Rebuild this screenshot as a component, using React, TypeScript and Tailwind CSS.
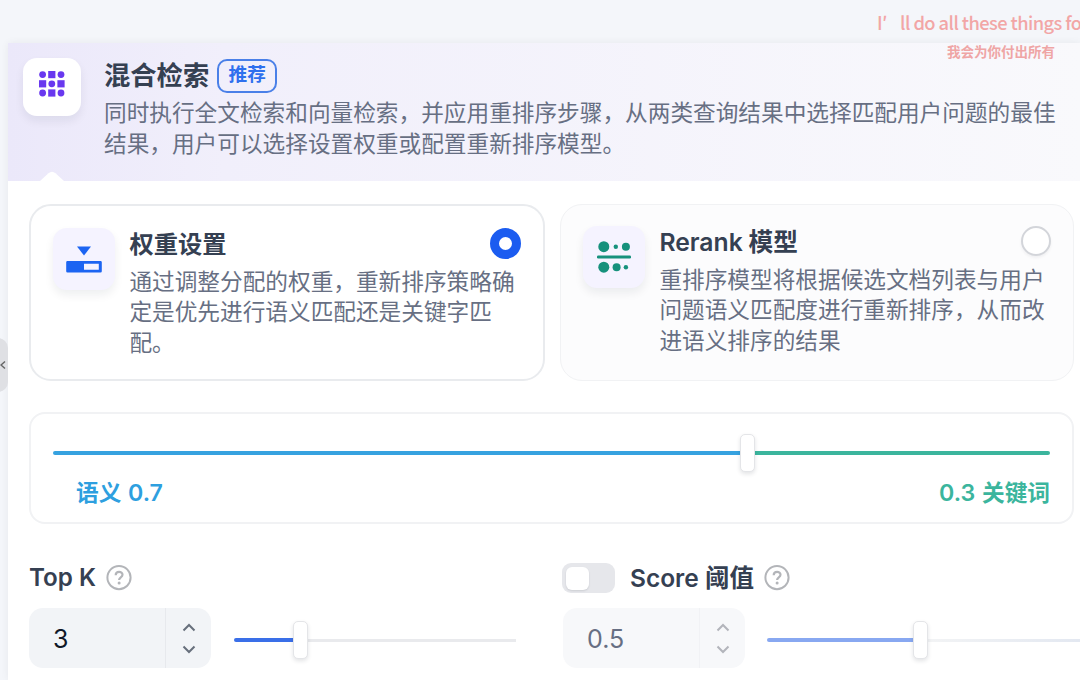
import type { ReactNode } from "react"

function HybridIcon() {
  const cells = [0, 1, 2, 3, 4, 5, 6, 7, 8]
  return (
    <svg width="26" height="26" viewBox="0 0 26 26" fill="#6938ef">
      {cells.map((i) => {
        const x = (i % 3) * 9.2
        const y = Math.floor(i / 3) * 9.2
        return i % 2 === 0 ? (
          <circle key={i} cx={x + 3.6} cy={y + 3.6} r="3.4" />
        ) : (
          <rect key={i} x={x} y={y} width="7.2" height="7.2" />
        )
      })}
    </svg>
  )
}

function WeightIcon() {
  return (
    <svg width="36" height="27" viewBox="0 0 36 27" fill="#1c64f2">
      <path d="M11 0.6h14l-7 8.9z" />
      <path
        fillRule="evenodd"
        d="M1.5 15h33a1.3 1.3 0 0 1 1.3 1.3v9a1.3 1.3 0 0 1-1.3 1.3h-33a1.3 1.3 0 0 1-1.3-1.3v-9a1.3 1.3 0 0 1 1.3-1.3zM18 17.7v6h14.8v-6z"
      />
    </svg>
  )
}

function RerankIcon() {
  return (
    <svg width="34" height="32" viewBox="0 0 34 32" fill="#16917c">
      <circle cx="6.8" cy="5.7" r="5.5" />
      <circle cx="18.8" cy="5.7" r="2.2" />
      <circle cx="28.9" cy="5.7" r="4" />
      <rect x="0" y="14.6" width="34" height="2.8" rx="1.2" />
      <circle cx="6.8" cy="26.2" r="5.5" />
      <circle cx="19.6" cy="26.2" r="4" />
      <circle cx="28.9" cy="26.2" r="2.2" />
    </svg>
  )
}

function HelpIcon() {
  return (
    <svg width="26" height="26" viewBox="0 0 26 26" fill="none" stroke="#b3b5b9" strokeWidth="2">
      <circle cx="13" cy="12.6" r="11.6" />
      <path d="M9.7 10.2c0-4.4 6.8-4.4 6.8-.4 0 2.6-3.4 2.6-3.4 5.2" strokeWidth="2.2" />
      <circle cx="13.1" cy="18.1" r="1.5" fill="#b3b5b9" stroke="none" />
    </svg>
  )
}

function Chevron({ down }: { down?: boolean }) {
  return (
    <svg width="14" height="9" viewBox="0 0 14 9" fill="none" stroke="currentColor" strokeWidth="2">
      <path d={down ? "M1.5 1.5 7 7l5.5-5.5" : "M1.5 7.5 7 2l5.5 5.5"} />
    </svg>
  )
}

function Thumb({ className }: { className: string }) {
  return (
    <span
      className={`absolute h-[38px] w-[15px] rounded-[5px] border border-[#e4e5e8] bg-white shadow-[0_2px_4px_rgba(16,24,40,0.12)] ${className}`}
    />
  )
}

function IconTile({ children, className }: { children: ReactNode; className: string }) {
  return (
    <div
      className={`flex shrink-0 items-center justify-center shadow-[0_5px_10px_rgba(16,24,40,0.07)] ${className}`}
    >
      {children}
    </div>
  )
}

function NumberInput({ value, disabled }: { value: string; disabled?: boolean }) {
  return (
    <div
      className={`flex h-[60px] w-[182px] shrink-0 overflow-hidden rounded-[14px] ${
        disabled ? "bg-[#f7f8fa] text-[#676f83]" : "bg-[#f2f4f7] text-[#101828]"
      }`}
    >
      <span className="flex flex-1 items-center pt-[3px] pl-6 text-[25px]">{value}</span>
      <span
        className={`flex w-[46px] flex-col items-center justify-center gap-[13px] border-l ${
          disabled ? "border-[#f1f2f5] text-[#b3b5bb]" : "border-[#e7e9ed] text-[#676f7c]"
        }`}
      >
        <Chevron />
        <Chevron down />
      </span>
    </div>
  )
}

export default function App() {
  return (
    <div className="relative h-[680px] w-[1080px] overflow-hidden bg-[#f4f6fa] pt-[43px] pl-2 font-[Inter,'Noto_Sans_CJK_SC',sans-serif] whitespace-nowrap text-[#354052]">
      <main className="h-[637px] bg-white shadow-[0_0_8px_rgba(16,24,40,0.06)]">
        <header className="relative flex h-[138px] bg-linear-to-r from-[#ebe8fa] via-[#f1effb] via-20% to-[#f9f9fc] pt-[15px] pl-[15px]">
          <IconTile className="h-[58px] w-[58px] rounded-[14px] bg-white pb-[6px]">
            <HybridIcon />
          </IconTile>
          <div className="ml-[23px]">
            <div className="flex h-[35px] items-center">
              <h1 className="text-[26.3px] leading-[35px] font-bold">混合检索</h1>
              <span className="ml-2 flex h-[34px] w-[60px] items-center justify-center rounded-[10px] border-2 border-[#4a80e8] text-[18.7px] leading-none font-bold text-[#2f70ee]">
                推荐
              </span>
            </div>
            <p className="mt-[5px] text-[22.67px] leading-[30.5px] text-[#676f83]">
              同时执行全文检索和向量检索，并应用重排序步骤，从两类查询结果中选择匹配用户问题的最佳
              <br />
              结果，用户可以选择设置权重或配置重新排序模型。
            </p>
          </div>
          <svg className="absolute bottom-0 left-8" width="24" height="10" viewBox="0 0 24 10" fill="white">
            <path d="M0 10 8.5 2.2Q12-.8 15.5 2.2L24 10z" />
          </svg>
        </header>

        <div className="pt-[23px] pl-[21px]">
          <div className="flex gap-[15px]">
            <section className="flex h-[177px] w-[516px] rounded-[22px] border-2 border-[#e9ebee] bg-white pt-[22px] pl-[22px]">
              <IconTile className="h-[62px] w-[62px] rounded-[14px] bg-[#f5f3ff]">
                <WeightIcon />
              </IconTile>
              <div className="ml-[14.4px]">
                <h2 className="text-[24.3px] leading-[32px] font-bold">权重设置</h2>
                <p className="mt-[7px] text-[22.67px] leading-[30.3px] text-[#676f83]">
                  通过调整分配的权重，重新排序策略确
                  <br />
                  定是优先进行语义匹配还是关键字匹
                  <br />
                  配。
                </p>
              </div>
              <span className="-ml-[24.4px] h-[31px] w-[31px] shrink-0 rounded-full border-[9px] border-[#1b5cf0] bg-white" />
            </section>

            <section className="flex h-[177px] w-[514px] rounded-[22px] border border-[#f1f2f4] bg-[#fcfcfd] pt-[21px] pl-[22px]">
              <IconTile className="h-[62px] w-[62px] rounded-[14px] bg-[#f5f3ff]">
                <RerankIcon />
              </IconTile>
              <div className="ml-[14.4px]">
                <h2 className="text-[24.7px] leading-[32px] font-bold">
                  <span className="font-semibold">Rerank</span> 模型
                </h2>
                <p className="mt-[7px] text-[22.67px] leading-[30.3px] text-[#676f83]">
                  重排序模型将根据候选文档列表与用户
                  <br />
                  问题语义匹配度进行重新排序，从而改
                  <br />
                  进语义排序的结果
                </p>
              </div>
              <span className="-ml-[23.4px] h-[30px] w-[30px] shrink-0 rounded-full border-2 border-[#d3d5da] bg-white shadow-[0_2px_3px_rgba(16,24,40,0.05)]" />
            </section>
          </div>

          <section className="mt-[31px] h-[112px] w-[1045px] rounded-[16px] border-2 border-[#f1f2f4] pt-[37px] pr-[22px] pl-[22px]">
            <div className="relative flex h-1">
              <span className="w-[695px] rounded-l-full bg-[#36a2e0]" />
              <span className="flex-1 rounded-r-full bg-[#3bb59d]" />
              <Thumb className="top-[-17px] left-[687px]" />
            </div>
            <div className="mt-[23px] flex justify-between pl-[23px] text-[22.67px] leading-[30px] font-semibold">
              <span className="text-[#2e9fdf]">
                <span className="font-bold">语义</span> <span className="ml-px text-[23.2px]">0.7</span>
              </span>
              <span className="text-[#3bb59d]">
                <span className="text-[23.2px]">0.3</span> <span className="ml-px font-bold">关键词</span>
              </span>
            </div>
          </section>

          <div className="mt-[37px] flex">
            <div className="w-[533px]">
              <div className="flex h-[34px] items-center gap-[10px]">
                <h3 className="text-[24.2px] leading-[34px] font-semibold">Top K</h3>
                <HelpIcon />
              </div>
              <div className="mt-[13px] flex items-center gap-[23px]">
                <NumberInput value="3" />
                <div className="relative mt-1 flex h-1 w-[282px] items-center">
                  <span className="h-1 w-[67px] rounded-l-full bg-[#3a6fe8]" />
                  <span className="h-[3px] flex-1 bg-[#e9eaed]" />
                  <Thumb className="top-[-17px] left-[59px]" />
                </div>
              </div>
            </div>

            <div className="w-[518px] overflow-hidden">
              <div className="flex h-[34px] items-center">
                <span className="flex h-[30px] w-[53px] items-center rounded-[9px] bg-[#e6e7eb] pl-1">
                  <span className="h-[23px] w-[23px] rounded-md bg-white shadow-[0_1px_2px_rgba(16,24,40,0.12)]" />
                </span>
                <h3 className="mr-[10px] ml-[15px] text-[24.5px] leading-[34px] font-semibold">
                  Score <span className="font-bold">阈值</span>
                </h3>
                <HelpIcon />
              </div>
              <div className="mt-[13px] flex items-center gap-[22px] pl-px">
                <NumberInput value="0.5" disabled />
                <div className="relative mt-1 flex h-1 flex-1 items-center">
                  <span className="h-1 w-[153px] rounded-l-full bg-[#88a8f1]" />
                  <span className="h-[3px] flex-1 bg-linear-to-r from-[#f3f4f5] to-[#e3e8f1]" />
                  <Thumb className="top-[-17px] left-[146px]" />
                </div>
              </div>
            </div>
          </div>
        </div>
      </main>

      <span className="absolute top-[338px] left-[-10px] h-[54px] w-[18px] rounded-r-[10px] bg-[#dfe0e4]" />
      <svg className="absolute top-[360px] left-0" width="6" height="10" viewBox="0 0 6 10" fill="none" stroke="#666" strokeWidth="1.5">
        <path d="M5 1.5 1 5l4 3.5" />
      </svg>

      <div className="absolute top-[9px] left-[877px] font-['Noto_Sans_CJK_SC',sans-serif] text-[18.3px] leading-[26px] font-medium tracking-[-0.57px] text-[#f2a6a6]">
        I<span className="inline-block w-[18px]">′</span>ll do all these things fo
      </div>
      <div className="absolute top-[41px] left-[947px] font-['Noto_Sans_CJK_SC',sans-serif] text-[13.5px] leading-5 font-bold text-[#efa5a5]">
        我会为你付出所有
      </div>
    </div>
  )
}
